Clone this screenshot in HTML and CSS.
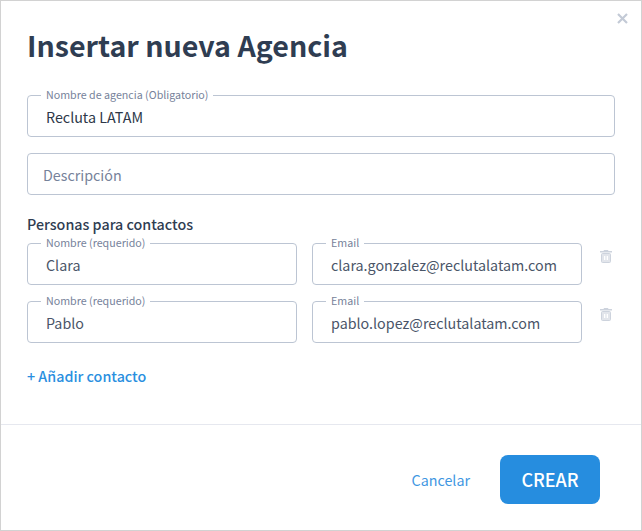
FILE: index.html
```html
<!DOCTYPE html>
<html lang="es">
<head>
    <meta charset="UTF-8">
    <meta name="viewport" content="width=device-width, initial-scale=1.0">
    <title>Insertar nueva Agencia</title>
    <link rel="stylesheet" href="styles.css">
</head>
<body>
    <div class="modal">
        <button class="close" aria-label="Cerrar">
            <svg width="11" height="11" viewBox="0 0 11 11"><path d="M1 1l9 9M10 1l-9 9"/></svg>
        </button>

        <div class="modal-body">
            <h1>Insertar nueva Agencia</h1>

            <fieldset class="field field-agency">
                <legend>Nombre de agencia (Obligatorio)</legend>
                <div class="value dark">Recluta LATAM</div>
            </fieldset>

            <div class="field-empty">Descripción</div>

            <h2>Personas para contactos</h2>

            <div class="contact">
                <fieldset class="field">
                    <legend>Nombre (requerido)</legend>
                    <div class="value">Clara</div>
                </fieldset>
                <fieldset class="field">
                    <legend>Email</legend>
                    <div class="value">clara.gonzalez@reclutalatam.com</div>
                </fieldset>
                <svg class="trash" width="12" height="13" viewBox="0 0 12 13">
                    <path class="trash-lid" d="M4 0h4l.5 1H12v1.500H0V1h3.500z"/>
                    <rect class="trash-can" x="1.500" y="3.500" width="9" height="9" rx="1"/>
                    <path class="trash-slots" d="M4 6h1.300v4H4zM6.700 6H8v4H6.700z"/>
                </svg>
            </div>

            <div class="contact">
                <fieldset class="field">
                    <legend>Nombre (requerido)</legend>
                    <div class="value">Pablo</div>
                </fieldset>
                <fieldset class="field">
                    <legend>Email</legend>
                    <div class="value">pablo.lopez@reclutalatam.com</div>
                </fieldset>
                <svg class="trash" width="12" height="13" viewBox="0 0 12 13">
                    <path class="trash-lid" d="M4 0h4l.5 1H12v1.500H0V1h3.500z"/>
                    <rect class="trash-can" x="1.500" y="3.500" width="9" height="9" rx="1"/>
                    <path class="trash-slots" d="M4 6h1.300v4H4zM6.700 6H8v4H6.700z"/>
                </svg>
            </div>

            <a class="add-contact" href="#">+ Añadir contacto</a>
        </div>

        <div class="modal-footer">
            <a class="cancel" href="#">Cancelar</a>
            <button class="create">CREAR</button>
        </div>
    </div>
</body>
</html>
```
FILE: styles.css
```css
* {
    box-sizing: border-box;
}

body {
    margin: 0;
    font-family: "Noto Sans CJK SC", "Noto Sans", sans-serif;
    color: #2d3b50;
    background-color: #fff;
}

.modal {
    position: relative;
    width: 642px;
    height: 531px;
    border: 1px solid #d2d2d2;
    background-color: #fff;
}

.close {
    position: absolute;
    top: 12px;
    right: 13px;
    padding: 0;
    border: none;
    background: none;
    line-height: 0;
}

.close path {
    fill: none;
    stroke: #c3cad6;
    stroke-width: 2.2;
}

.modal-body {
    height: 424px;
    padding: 24px 26px 0;
    border-bottom: 1px solid #e6e8ef;
}

h1 {
    margin: 0 0 24px;
    font-size: 28.6px;
    line-height: 40px;
    font-weight: 700;
    color: #2f3d52;
}

h2 {
    margin: 0 0 3px;
    font-size: 14.3px;
    line-height: 20px;
    font-weight: 500;
    color: #2f3d52;
}

.field {
    display: block;
    min-width: 0;
    height: 48px;
    margin: 0 0 10px;
    padding: 0 0 0 18px;
    border: 1px solid #bcc5d3;
    border-radius: 4px;
}

.field-agency {
    margin-bottom: 16px;
}

.field legend {
    margin-left: -5px;
    padding: 0 5px;
    font-size: 10.7px;
    line-height: 12px;
    color: #76829a;
}

.value {
    font-size: 14.3px;
    line-height: 22px;
    margin-top: 5px;
    color: #4a5568;
}

.value.dark {
    color: #2d3748;
}

.field-empty {
    height: 42px;
    padding-left: 15px;
    margin-bottom: 19px;
    border: 1px solid #bcc5d3;
    border-radius: 4px;
    font-size: 14.3px;
    line-height: 42px;
    color: #76829a;
}

.contact {
    display: grid;
    grid-template-columns: 270px 270px 12px;
    column-gap: 15px;
    align-items: start;
}

.trash {
    margin: 13px 0 0 3px;
}

.trash-lid {
    fill: #cdd3dd;
}

.trash-can {
    fill: #e2e5eb;
    stroke: #cdd3dd;
}

.trash-slots {
    fill: #fff;
}

.add-contact {
    display: inline-block;
    margin-top: 13px;
    font-size: 14.3px;
    line-height: 20px;
    font-weight: 500;
    color: #2a8fdf;
    text-decoration: none;
}

.modal-footer {
    display: flex;
    justify-content: flex-end;
    align-items: center;
    gap: 30px;
    padding: 30px 41px 0 0;
}

.cancel {
    font-size: 14.3px;
    color: #3f97e2;
    text-decoration: none;
}

.create {
    width: 100px;
    height: 49px;
    padding: 0 0 2px;
    border: none;
    border-radius: 8px;
    font-family: inherit;
    font-size: 18px;
    font-weight: 500;
    color: #fff;
    background-color: #268ddf;
}
```
